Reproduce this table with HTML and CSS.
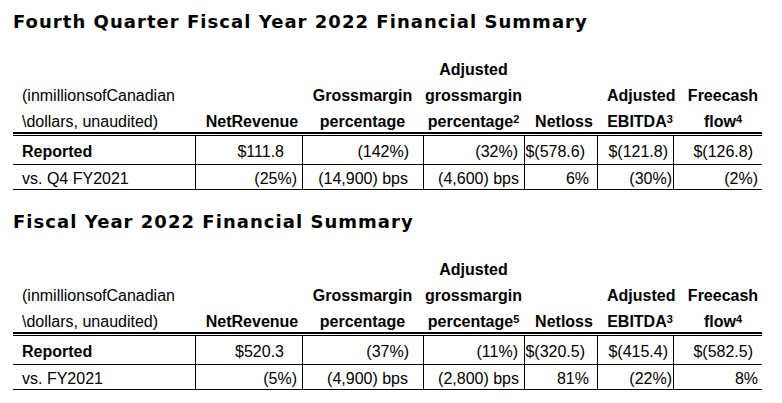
FILE: index.html
```html
<!DOCTYPE html>
<html lang="en">
<head>
<meta charset="utf-8">
<title>Fiscal Year 2022 Financial Summary</title>
<link rel="stylesheet" href="styles.css">
</head>
<body>
<section class="summary">
  <h2 class="title">Fourth Quarter Fiscal Year 2022 Financial Summary</h2>
  <div class="table">
    <div class="head">
      <div class="hcell unit">(inmillionsofCanadian<br>\dollars, unaudited)</div>
      <div class="hcell rev">NetRevenue</div>
      <div class="hcell">Grossmargin<br>percentage</div>
      <div class="hcell">Adjusted<br>grossmargin<br>percentage<sup>2</sup></div>
      <div class="hcell netloss">Netloss</div>
      <div class="hcell ebitda">Adjusted<br>EBITDA<sup>3</sup></div>
      <div class="hcell fcf">Freecash<br>flow<sup>4</sup></div>
    </div>
    <div class="rule"></div>
    <div class="row reported">
      <div class="cell label">Reported</div>
      <div class="cell c-rev">$111.8</div>
      <div class="cell c-gm">(142%)</div>
      <div class="cell c-agm">(32%)</div>
      <div class="cell c-nl">$(578.6)</div>
      <div class="cell c-eb">$(121.8)</div>
      <div class="cell c-fcf">$(126.8)</div>
    </div>
    <div class="row change">
      <div class="cell label">vs. Q4 FY2021</div>
      <div class="cell c-rev">(25%)</div>
      <div class="cell c-gm">(14,900) bps</div>
      <div class="cell c-agm">(4,600) bps</div>
      <div class="cell c-nl">6%</div>
      <div class="cell c-eb">(30%)</div>
      <div class="cell c-fcf">(2%)</div>
    </div>
  </div>
</section>
<section class="summary">
  <h2 class="title">Fiscal Year 2022 Financial Summary</h2>
  <div class="table">
    <div class="head">
      <div class="hcell unit">(inmillionsofCanadian<br>\dollars, unaudited)</div>
      <div class="hcell rev">NetRevenue</div>
      <div class="hcell">Grossmargin<br>percentage</div>
      <div class="hcell">Adjusted<br>grossmargin<br>percentage<sup>5</sup></div>
      <div class="hcell netloss">Netloss</div>
      <div class="hcell ebitda">Adjusted<br>EBITDA<sup>3</sup></div>
      <div class="hcell fcf">Freecash<br>flow<sup>4</sup></div>
    </div>
    <div class="rule"></div>
    <div class="row reported">
      <div class="cell label">Reported</div>
      <div class="cell c-rev">$520.3</div>
      <div class="cell c-gm">(37%)</div>
      <div class="cell c-agm">(11%)</div>
      <div class="cell c-nl">$(320.5)</div>
      <div class="cell c-eb">$(415.4)</div>
      <div class="cell c-fcf">$(582.5)</div>
    </div>
    <div class="row change">
      <div class="cell label">vs. FY2021</div>
      <div class="cell c-rev">(5%)</div>
      <div class="cell c-gm">(4,900) bps</div>
      <div class="cell c-agm">(2,800) bps</div>
      <div class="cell c-nl">81%</div>
      <div class="cell c-eb">(22%)</div>
      <div class="cell c-fcf">8%</div>
    </div>
  </div>
</section>
</body>
</html>
```
FILE: styles.css
```css
* { box-sizing: border-box; }
html, body { margin: 0; padding: 0; background: #fff; color: #000; }
body { font-family: "Liberation Sans", Arial, sans-serif; font-size: 16px; }

.summary { height: 200px; padding-top: 10px; }

.title {
  margin: 0;
  padding-left: 13px;
  font-family: "DejaVu Sans", Verdana, sans-serif;
  font-weight: bold;
  font-size: 18px;
  line-height: 24px;
  letter-spacing: 1.04px;
  white-space: nowrap;
}

.table { margin: 23px 0 0 13px; width: 749px; }

.head, .row {
  display: grid;
  grid-template-columns: 182px 107px 121px 101px 73px 76px 89px;
}

.hcell {
  align-self: end;
  margin-bottom: -3px;
  line-height: 26px;
  font-weight: bold;
  text-align: center;
  white-space: nowrap;
}
.hcell.unit { font-weight: normal; text-align: left; padding-left: 9px; }
.hcell.rev { padding-left: 7px; }
.hcell.netloss { padding-left: 7px; }
.hcell.ebitda { padding-left: 10px; }
.hcell.fcf { padding-left: 11px; }

sup { font-size: 11px; line-height: 0; vertical-align: 4px; }

.rule {
  height: 4px;
  border-top: 2px solid #000;
  border-bottom: 1px solid #000;
}

.cell {
  line-height: 18px;
  white-space: nowrap;
  text-align: right;
  border-left: 1px solid #000;
  border-bottom: 1px solid #000;
}
.cell.label { border-left: none; text-align: left; padding-left: 9px; }
.reported .cell { padding-top: 7px; padding-bottom: 3px; height: 29px; }
.reported .cell.label { font-weight: bold; }
.change .cell { padding-top: 5px; padding-bottom: 1px; height: 25px; }

.reported .c-rev { padding-right: 18px; }
.reported .c-gm { padding-right: 14px; }
.reported .c-agm { padding-right: 6px; }
.reported .c-nl { padding-right: 12px; }
.reported .c-eb { padding-right: 5px; }
.reported .c-fcf { padding-right: 9px; }

.change .c-rev { padding-right: 5px; }
.change .c-gm { padding-right: 15px; }
.change .c-agm { padding-right: 5px; }
.change .c-nl { padding-right: 8px; }
.change .c-eb { padding-right: 1px; }
.change .c-fcf { padding-right: 4px; }
```
